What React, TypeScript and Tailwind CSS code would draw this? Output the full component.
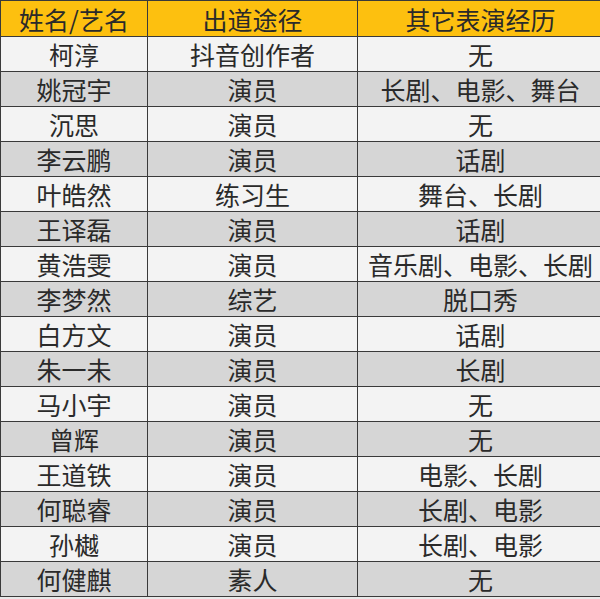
const rows: [string, string, string][] = [
  ["柯淳", "抖音创作者", "无"],
  ["姚冠宇", "演员", "长剧、电影、舞台"],
  ["沉思", "演员", "无"],
  ["李云鹏", "演员", "话剧"],
  ["叶皓然", "练习生", "舞台、长剧"],
  ["王译磊", "演员", "话剧"],
  ["黄浩雯", "演员", "音乐剧、电影、长剧"],
  ["李梦然", "综艺", "脱口秀"],
  ["白方文", "演员", "话剧"],
  ["朱一未", "演员", "长剧"],
  ["马小宇", "演员", "无"],
  ["曾辉", "演员", "无"],
  ["王道铁", "演员", "电影、长剧"],
  ["何聪睿", "演员", "长剧、电影"],
  ["孙樾", "演员", "长剧、电影"],
  ["何健麒", "素人", "无"],
];

function Row({ cells, className }: { cells: string[]; className: string }) {
  return (
    <div className={`grid grid-cols-[147px_210px_1fr] border-b border-[#3a3a3a] ${className}`}>
      {cells.map((c, i) => (
        <div
          key={i}
          className={`flex items-center justify-center whitespace-nowrap pt-[1px] ${i < 2 ? "border-r border-[#3a3a3a]" : ""}`}
        >
          {c}
        </div>
      ))}
    </div>
  );
}

export default function App() {
  return (
    <div className="w-[600px] h-[599px] overflow-hidden bg-[#e9e9e9]">
      <div
        className="w-[603px] border-t border-l border-[#3a3a3a] text-[25px] leading-none text-[#2a2a2a]"
        style={{ fontFamily: '"Noto Sans CJK SC", "Noto Sans", sans-serif' }}
      >
        {/* 表头 */}
        <Row cells={["姓名/艺名", "出道途径", "其它表演经历"]} className="h-[36px] bg-[#fdc00f]" />
        {rows.map((r, i) => (
          <Row
            key={i}
            cells={r}
            className={`h-[35px] ${i % 2 === 0 ? "bg-[#f3f3f3]" : "bg-[#d6d6d6]"}`}
          />
        ))}
      </div>
    </div>
  );
}
